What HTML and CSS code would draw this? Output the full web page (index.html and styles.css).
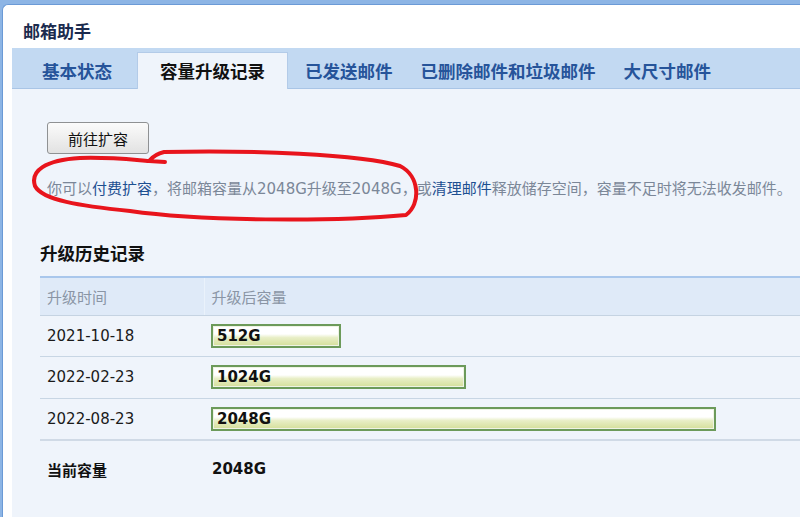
FILE: index.html
```html
<!DOCTYPE html>
<html lang="zh-CN">
<head>
<meta charset="utf-8">
<title>邮箱助手</title>
<link rel="stylesheet" href="styles.css">
</head>
<body>
<div class="window">
  <h1 class="app-title">邮箱助手</h1>
  <div class="panel">
    <ul class="tabs">
      <li class="tab">基本状态</li>
      <li class="tab active">容量升级记录</li>
      <li class="tab">已发送邮件</li>
      <li class="tab">已删除邮件和垃圾邮件</li>
      <li class="tab">大尺寸邮件</li>
    </ul>
    <div class="content">
      <button class="btn" type="button">前往扩容</button>
      <p class="notice">你可以<a class="link">付费扩容</a>，将邮箱容量从2048G升级至2048G，或<a class="link">清理邮件</a>释放储存空间，容量不足时将无法收发邮件。</p>
      <h2 class="section-title">升级历史记录</h2>
      <table class="history">
        <thead>
          <tr><th class="col-date">升级时间</th><th class="col-size">升级后容量</th></tr>
        </thead>
        <tbody>
          <tr><td>2021-10-18</td><td><span class="bar" style="width:130px">512G</span></td></tr>
          <tr><td>2022-02-23</td><td><span class="bar" style="width:255px">1024G</span></td></tr>
          <tr class="last"><td>2022-08-23</td><td><span class="bar" style="width:505px">2048G</span></td></tr>
        </tbody>
        <tfoot>
          <tr><td class="total-label">当前容量</td><td class="total-value">2048G</td></tr>
        </tfoot>
      </table>
    </div>
  </div>
</div>
<!-- hand-drawn red loop marking the notice line -->
<svg class="annotation" width="800" height="517" viewBox="0 0 800 517">
  <path d="M165 162 L149 161 Q155 154 164 152 C250 150 360 154 400 166 C420 176 421 204 406 215 C330 222 200 221 130 211 C80 206 42 200 35 186 C30 171 45 160 80 158 C110 157 135 160 149 161" fill="none" stroke="#e8141c" stroke-width="4" stroke-linecap="round" stroke-linejoin="round"/>
</svg>
</body>
</html>
```

FILE: styles.css
```css
* { box-sizing: border-box; }

html, body {
  margin: 0;
  height: 100%;
}

body {
  background: #8db5e5;
  font-family: "DejaVu Sans", "Noto Sans CJK SC", sans-serif;
  overflow: hidden;
  position: relative;
}

.window {
  margin: 4px 0 0 2px;
  height: calc(100% - 4px);
  background: #ffffff;
  border-top: 1px solid #6b9ad6;
  border-left: 1px solid #6b9ad6;
  border-top-left-radius: 6px;
  display: flex;
  flex-direction: column;
}

.app-title {
  margin: 0;
  height: 43px;
  padding: 14px 0 0 20px;
  font-size: 17px;
  line-height: 24px;
  font-weight: 700;
  color: #1b2b4e;
  font-family: "Noto Sans CJK SC", sans-serif;
}

.panel {
  margin-left: 9px;
  flex: 1;
  background: #eff4fb;
  display: flex;
  flex-direction: column;
}

.tabs {
  list-style: none;
  margin: 0;
  padding: 0 0 0 16px;
  height: 41px;
  background: #c2d9f2;
  border-bottom: 1px solid #a9c5e6;
  display: flex;
  align-items: flex-end;
}

.tab {
  height: 35px;
  line-height: 35px;
  padding: 0 14px;
  font-family: "Noto Sans CJK SC", sans-serif;
  font-size: 17.5px;
  font-weight: 700;
  color: #26549a;
  white-space: nowrap;
}

.tab.active {
  height: 37px;
  margin: 0 3px -1px 11px;
  padding: 0 22px;
  background: #eff4fb;
  border: 1px solid #b3cbe8;
  border-bottom: none;
  color: #111111;
}

.content {
  padding: 33px 0 0 28px;
}

.btn {
  display: block;
  margin-left: 7px;
  width: 102px;
  height: 32px;
  padding: 0;
  border: 1px solid #8f9193;
  border-radius: 3px;
  background: linear-gradient(#fbfbfb, #e2e2e2);
  font-family: "Noto Sans CJK SC", sans-serif;
  font-size: 15px;
  color: #111111;
}

.notice {
  margin: 25px 0 0 7px;
  font-size: 15px;
  line-height: 20px;
  color: #7b8798;
  white-space: nowrap;
}

.link {
  color: #1d4f91;
  text-decoration: none;
}

.section-title {
  margin: 42px 0 11px;
  font-family: "Noto Sans CJK SC", sans-serif;
  font-size: 17.5px;
  line-height: 24px;
  font-weight: 700;
  color: #111111;
}

.history {
  width: 100%;
  border-collapse: collapse;
  border-top: 2px solid #a9c7ec;
}

.history th,
.history td {
  padding: 0 8px 0 7px;
  text-align: left;
  white-space: nowrap;
}

.history th {
  height: 38px;
  background: #dfeaf8;
  font-family: "Noto Sans CJK SC", sans-serif;
  font-size: 15px;
  font-weight: 400;
  color: #8a95a5;
  border-bottom: 1px solid #c5d3e2;
}

.history .col-date { width: 164px; }
.history .col-size { border-left: 1px solid #eaf2fb; }

.history tbody td {
  height: 41.5px;
  font-size: 15px;
  color: #1a1a1a;
  border-bottom: 1px solid #c8d6e4;
}

.history tbody tr.last td {
  border-bottom: 2px solid #d0dae6;
}

.bar {
  display: block;
  height: 24px;
  padding-left: 4px;
  border: 2px solid #6c9a5a;
  box-shadow: inset 0 0 0 1px #eef3e4;
  background: linear-gradient(#ffffff 0, #ffffff 40%, #e8eec6 58%, #d4df9a 100%);
  font-weight: 700;
  font-size: 15px;
  line-height: 20px;
  color: #111111;
}

.history tfoot td {
  height: 58px;
  font-weight: 700;
  font-size: 15px;
  color: #111111;
}

.history .total-label {
  font-family: "Noto Sans CJK SC", sans-serif;
}

.history .total-value { padding-left: 8px; }

.annotation {
  position: absolute;
  left: 0;
  top: 0;
  pointer-events: none;
}
```
